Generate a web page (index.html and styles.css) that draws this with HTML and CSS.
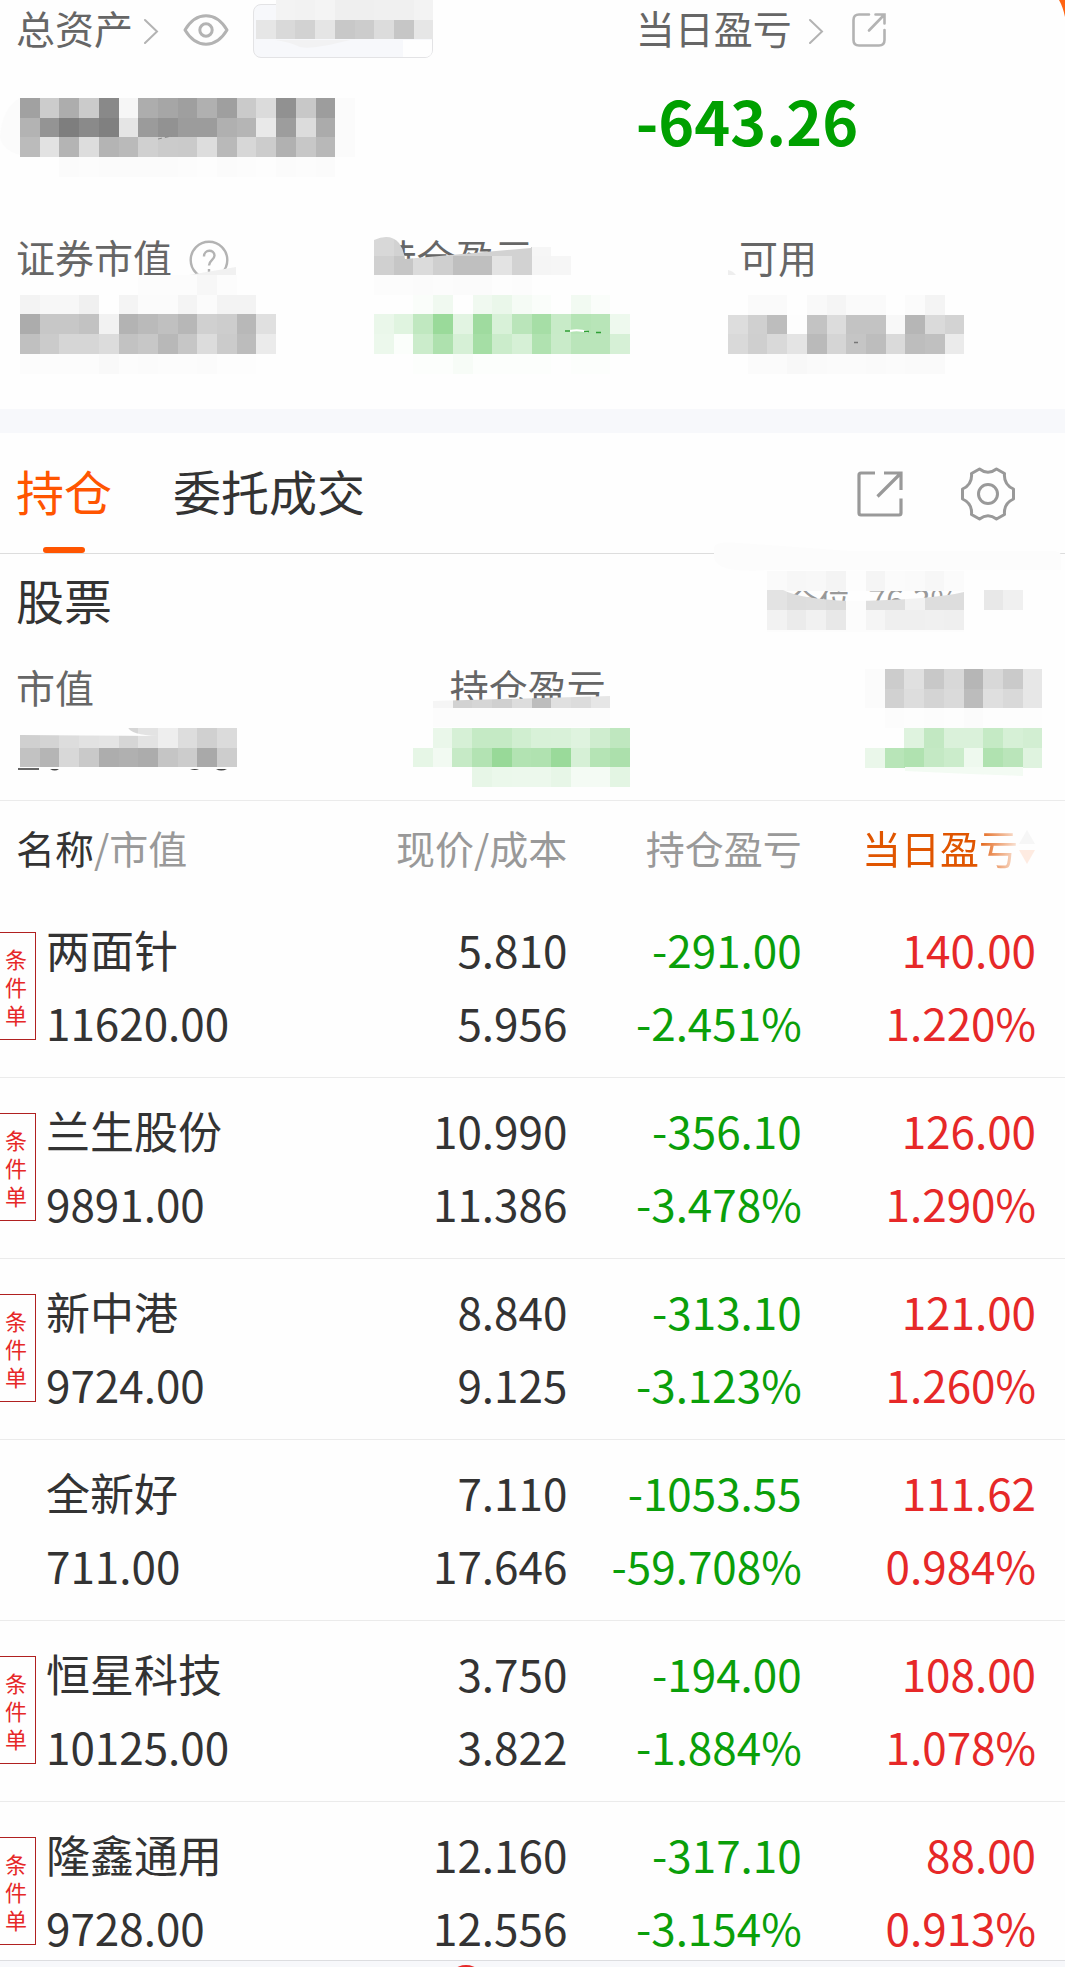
FILE: index.html
```html
<!DOCTYPE html>
<html lang="zh-CN">
<head>
<meta charset="utf-8">
<meta name="viewport" content="width=device-width, initial-scale=1">
<title>持仓</title>
<link rel="stylesheet" href="styles.css">
</head>
<body>
<div class="app">
<main class="scroll">
  <section class="summary">
    <div class="totals">
      <div>
        <div class="head">
          <a class="head-link" href="#assets"><span class="label">总资产</span>
            <svg class="chevron" width="16" height="26" viewBox="0 0 16 26"><path d="M2 2 14 13.500 2 25"/></svg></a>
          <button class="icon-btn" type="button" aria-label="隐藏金额">
            <svg width="46" height="32" viewBox="0 0 46 32" fill="none" stroke="#b3b3b3" stroke-width="3"><path d="M2 16C8 6 15 1.800 23 1.800S38 6 44 16C38 26 31 30.200 23 30.200S8 26 2 16Z" stroke-linejoin="round"/><circle cx="23" cy="16" r="6.200"/></svg>
          </button>
          <span class="pill"></span>
        </div>
      </div>
      <div>
        <div class="head head-day">
          <a class="head-link" href="#day"><span class="label">当日盈亏</span>
            <svg class="chevron" width="16" height="26" viewBox="0 0 16 26"><path d="M2 2 14 13.500 2 25"/></svg></a>
          <button class="icon-btn" type="button" aria-label="分享">
            <svg width="34" height="34" viewBox="0 0 34 34" fill="none" stroke="#b3b3b3" stroke-width="2.600" stroke-linecap="round"><path d="M17 1.500H7Q1.500 1.500 1.500 7V27Q1.500 32.500 7 32.500H27Q32.500 32.500 32.500 27V17"/><path d="M23.500 1.500H32.500V10.500M32 2 17 17.500"/></svg>
          </button>
        </div>
        <div class="day-value">-643.26</div>
      </div>
    </div>
    <div class="metrics">
      <div class="metric"><span class="label">证券市值</span>
        <svg class="help" width="40" height="34" viewBox="0 0 40 34" fill="none" stroke="#b3b3b3" stroke-width="2.400"><circle cx="20" cy="20" r="18.300"/><path d="M15 16.500C15 9 25.500 9 25.500 15.500 25.500 20 20 20.500 20 25.500M20 29V32"/></svg></div>
      <div class="metric"><span class="label">持仓盈亏</span></div>
      <div class="metric"><span class="label">可用</span></div>
    </div>
    <svg class="redaction" width="1065" height="409" viewBox="0 0 1065 409" aria-hidden="true">
      <clipPath id="pnl-label"><path d="M374 240Q390 233 399 243 404 250 405 259L531 248V247H575V276H374Z"/></clipPath>
      <path d="M403 40H432V50Q432 57 425 57H403Z" fill="#fefefe"/>
      <g data-at="256 0" data-cells="- f3 f2 f4 ef ef f0 f0 f3/e6 d9 d2 e5 c8 cc dc c6 e6"></g>
      <path d="M275 40H350Q312 50 300 47 290 42 275 40Z" fill="#f2f2f3"/>
      <path d="M0 137Q2 108 20 98V155Q2 150 0 137Z" fill="#fbfbfb"/>
      <g data-at="20 98" data-cells="a1 cc ad cb 89 f6 ad a6 9f b0 9f ca db 91 c8 9d fb/b3 94 7e 8a 80 e5 9b 92 9c 9c b0 b5 e9 9d dc ab fb/bb e2 b4 dd b4 ba d0 cb ca dd b9 d7 cc b1 c7 b8 fb/- - fb fc fb fb fb fb fc fd fb fc fd fb fc fb"></g>
      <path d="M158 139 172 136" stroke="#8a8a8a" stroke-dasharray="4 3"/>
      <path d="M189 275 236 267V275Z" fill="#f1f1f1"/>
      <g data-at="20 275" data-cells="- - - - - - fc fc fc f7 fc/f3 f7 f7 f0 fe f4 fb fb f4 fb f3 f3/ac c7 c7 c2 f2 b3 ba c0 b7 d0 cd b8 e0/c0 cb d6 d6 dc c2 c7 b8 c6 dc cb bc eb/fc fc fc fc f9 fc fb fc fc fb fd fd"></g>
      <g clip-path="url(#pnl-label)"><g data-at="374 236" data-cells="d8 d2 d2 d2 d2 d2 d2 d2 f6/d0 c6 db cf bf bf e3 d2 f5 f6"></g></g>
      <g data-at="374 275" data-cells="fc fc fb fc fb fb fd fc/- - gfa gf0 - gf0 gea gf5 gfa - gf2 gfa/gea ge0 gc0 g9a ge2 g9f gd8 gba ga6 gc8 gb5 gb8 gee/gec gfb gcb gae gd6 ga5 gcb gd6 gb0 gc9 gba gba gd6/- - gfc gfc gf7 gfc gfc gfc gfc - gfc gfc"></g>
      <path d="M570 331Q578 329 588 332" stroke="#fff" stroke-width="2" fill="none"/>
      <path d="M565 331h5M584 331.500h5M596 332.500h5" stroke="#2f9f35" stroke-width="1.500"/>
      <path d="M728 270Q733 271 736 275H728Z" fill="#eee"/>
      <g data-at="728 295" data-cells="- fa fa - f9 f5 fa fa - fb f4/dd d0 bd fd c3 dc c3 c3 f8 b6 da d3/d9 cf d9 e4 ba d5 c5 bd da bd c0 eb/- fb fb f8 fa fb fb fa fb fa fa"></g>
      <path d="M854 342.500h4" stroke="#777" stroke-width="1.500"/>
    </svg>
    <svg class="corner" width="6" height="17" viewBox="0 0 6 17"><path d="M0 0H6V17Q4 7 0 0Z" fill="#ff6412"/></svg>
  </section>

  <section class="panel">
    <nav class="tabs">
      <button class="tab active" type="button">持仓</button>
      <button class="tab" type="button">委托成交</button>
      <span class="tools">
        <button class="icon-btn" type="button" aria-label="导出">
          <svg width="46" height="46" viewBox="0 0 46 46" fill="none" stroke="#999" stroke-width="3.200"><path d="M18 2H4Q2 2 2 4V42Q2 44 4 44H42Q44 44 44 42V27.500"/><path d="M27 2H44V19M43.500 2.500 20.500 25.500"/></svg>
        </button>
        <button class="icon-btn" type="button" aria-label="设置">
          <svg width="54" height="54" viewBox="0 0 54 54" fill="none" stroke="#999" stroke-width="3" stroke-linejoin="round"><path d="M18.500 2Q27 8.500 35.500 2L43.500 6.500Q42.500 17.500 52.500 22V32Q42.500 36.500 43.500 47.500L35.500 52Q27 45.500 18.500 52L10.500 47.500Q11.500 36.500 1.500 32V22Q11.500 17.500 10.500 6.500Z"/><circle cx="27" cy="27" r="9.500"/></svg>
        </button>
      </span>
    </nav>
    <div class="stock-head"><h2>股票</h2><p class="position"><span>仓位</span><span>76.3%</span></p></div>
    <div class="stock-metrics">
      <div class="metric"><span class="label">市值</span></div>
      <div class="metric"><span class="label">持仓盈亏</span></div>
    </div>
    <svg class="redaction" width="1065" height="367" viewBox="0 433 1065 367" aria-hidden="true">
      <clipPath id="position-cut"><path d="M767 590H783Q800 599 850 601 930 600 964 592V588H1065V611H767Z"/></clipPath>
      <clipPath id="value-cut"><path d="M20 735 158 736Q130 735 128 727H240V768H20Z"/></clipPath>
      <clipPath id="label-cut"><path d="M433 701 610 696V708H433Z"/></clipPath>
      <path d="M714 548Q714 541 740 543L850 551H1052Q1061 551 1061 556V570H767Q714 574 714 556Z" fill="#fcfcfc"/>
      <path d="M767 601H964V632H767Z" fill="#fcfcfc"/>
      <g data-at="767 571" data-cells="fa f7 f8 f4 fd f5 fb fa f7 fb"></g>
      <g clip-path="url(#position-cut)"><g data-at="767 590" data-cells="e3 dd de db fc df df f2 dd dd - e8 f0"></g></g>
      <g data-at="767 610" data-cells="f2 eb f1 e8 fc f5 ef ef f0 ef"></g>
      <path d="M18 769h21" stroke="#333" stroke-width="1.500"/>
      <path d="M50 769Q55 772 59 769ZM128 769.500h8M175 769.500h3M190 769Q195 771 199 769ZM216 769Q221 772 227 769Z" fill="#444"/>
      <g clip-path="url(#value-cut)"><g data-at="20 728" data-cells="d0 d4 dd e2 e4 d6 e3 ee dd d0 db/c2 b5 d8 c9 ad b0 ac c5 cc a9 cd"></g></g>
      <path d="M433 708H610V727H433Z" fill="#fcfcfc"/>
      <g clip-path="url(#label-cut)"><g data-at="433 688" data-cells="f5 d2 d6 d0 dd bd e0 dc e6"></g></g>
      <g data-at="413 728" data-cells="- gea gd6 gc5 gc5 gd0 gd8 gd9 gdf gcf gbf/ge6 gf2 gc6 gb3 g98 gb2 gb0 g9a gd6 gb5 gac/- - - ge7 geb gec gec ge7 gf4 gf4 ge3"></g>
      <g data-at="865 669" data-cells="fb cc e0 c8 d8 b6 d8 ca e7/fb d1 dd d4 da bc df d9 e7/- fc fd fc fd fb fd fd fd/- - gdf gc2 gda gda gc5 gd6 gd2/gea gb8 gb0 gc4 gcb gee gb0 gba gdf"></g>
      <path d="M905 767H1023V776L970 774 905 771Z" fill="#f3fbf3"/>
    </svg>
  </section>

  <table class="holdings">
    <colgroup><col class="wide"><col class="wide"><col><col></colgroup>
    <thead>
      <tr>
        <th scope="col"><span class="strong">名称</span>/市值</th>
        <th scope="col">现价/成本</th>
        <th scope="col">持仓盈亏</th>
        <th scope="col"><button class="sort" type="button">当日盈亏<svg width="18" height="36" viewBox="0 0 18 36"><path d="M9 1 17 15H1Z" fill="#bbb"/><path d="M1 21H17L9 35Z" fill="#ff6412"/></svg></button></th>
      </tr>
    </thead>
    <tbody>
      <tr><td><div class="stock"><span class="badge">条件单</span><span class="name">两面针<br>11620.00</span></div></td><td>5.810<br>5.956</td><td class="down">-291.00<br>-2.451%</td><td class="up">140.00<br>1.220%</td></tr>
      <tr><td><div class="stock"><span class="badge">条件单</span><span class="name">兰生股份<br>9891.00</span></div></td><td>10.990<br>11.386</td><td class="down">-356.10<br>-3.478%</td><td class="up">126.00<br>1.290%</td></tr>
      <tr><td><div class="stock"><span class="badge">条件单</span><span class="name">新中港<br>9724.00</span></div></td><td>8.840<br>9.125</td><td class="down">-313.10<br>-3.123%</td><td class="up">121.00<br>1.260%</td></tr>
      <tr><td><div class="stock"><span class="name">全新好<br>711.00</span></div></td><td>7.110<br>17.646</td><td class="down">-1053.55<br>-59.708%</td><td class="up">111.62<br>0.984%</td></tr>
      <tr><td><div class="stock"><span class="badge">条件单</span><span class="name">恒星科技<br>10125.00</span></div></td><td>3.750<br>3.822</td><td class="down">-194.00<br>-1.884%</td><td class="up">108.00<br>1.078%</td></tr>
      <tr><td><div class="stock"><span class="badge">条件单</span><span class="name">隆鑫通用<br>9728.00</span></div></td><td>12.160<br>12.556</td><td class="down">-317.10<br>-3.154%</td><td class="up">88.00<br>0.913%</td></tr>
    </tbody>
  </table>
</main>
<footer class="bottom-bar"><span class="dot"></span></footer>
</div>
<script src="mosaic.js"></script>
</body>
</html>
```
FILE: styles.css
```css
* { box-sizing: border-box; }

body {
  margin: 0;
  background: #fefefe;
  color: #333;
  font-family: "Noto Sans CJK SC", "Noto Sans", sans-serif;
  font-size: 39px;
}

button {
  margin: 0;
  padding: 0;
  border: 0;
  background: none;
  color: inherit;
  font: inherit;
}

a { color: inherit; text-decoration: none; }
svg { display: block; flex: none; }

.app {
  display: flex;
  flex-direction: column;
  height: 100vh;
}

.scroll {
  flex: 1;
  min-height: 0;
  overflow: hidden auto;
  scrollbar-width: none;
}

.label {
  padding-bottom: 4px;
  color: #666;
  line-height: 54px;
  white-space: nowrap;
}

/* Account summary */
.summary {
  position: relative;
  overflow: hidden;
  padding: 0 16px;
  border-bottom: 24px solid #f7f8fb;
}

.totals {
  display: grid;
  grid-template-columns: 60% 40%;
}

.head {
  display: flex;
  align-items: center;
  gap: 24px;
  height: 58px;
}

.head-link {
  display: flex;
  align-items: center;
  gap: 10px;
}

.head-day { gap: 28px; }
.head-day .head-link { gap: 16px; }

.chevron {
  margin-top: 4px;
  fill: none;
  stroke: #b3b3b3;
  stroke-width: 2;
  stroke-linecap: round;
}

.pill {
  align-self: flex-end;
  width: 180px;
  height: 54px;
  border: 1px solid #e3e3e5;
  border-radius: 8px;
  background: #f7f8fb;
}

.icon-btn { padding-top: 2px; }

.day-value {
  margin-top: 24px;
  color: #00a000;
  font-size: 61px;
  font-weight: 700;
  line-height: 76px;
}

.metrics {
  display: grid;
  grid-template-columns: 35% 35% 30%;
  margin-top: 71px;
  min-height: 180px;
}

.metric {
  display: flex;
  align-items: flex-start;
  gap: 17px;
}

.help { margin-top: 11px; }

.redaction {
  position: absolute;
  top: 0;
  left: 0;
  pointer-events: none;
}

.corner {
  position: absolute;
  top: 0;
  right: 0;
}

/* Tabs and stock totals */
.panel {
  position: relative;
  overflow: hidden;
  border-bottom: 1px solid #ebebeb;
}

.tabs {
  display: flex;
  align-items: stretch;
  gap: 61px;
  height: 121px;
  padding: 0 50px 0 16px;
  border-bottom: 1px solid #ddd;
}

.tab {
  position: relative;
  padding-bottom: 6px;
  font-size: 48px;
  white-space: nowrap;
}

.active { color: #ff5500; }

.active::after {
  content: "";
  position: absolute;
  bottom: 0;
  left: 50%;
  width: 42px;
  height: 6px;
  margin-left: -21px;
  border-radius: 3px;
  background: #ff5500;
}

.tools {
  display: flex;
  align-items: center;
  gap: 58px;
  margin-left: auto;
}

.stock-head {
  display: flex;
  align-items: center;
  justify-content: space-between;
  padding: 0 105px 2px 16px;
}

.stock-head h2 {
  margin: 0;
  font-size: 48px;
  font-weight: 400;
  line-height: 90px;
}

.position {
  display: flex;
  gap: 18px;
  margin: 0;
  color: #999;
  font-size: 32px;
}

.stock-metrics {
  display: grid;
  grid-template-columns: 42% 58%;
  min-height: 154px;
  padding: 13px 16px 0;
}

/* Holdings */
.holdings {
  width: 100%;
  border-collapse: collapse;
  table-layout: fixed;
}

.holdings col { width: 22%; }
.holdings .wide { width: 28%; }

.holdings th {
  height: 96px;
  padding: 0 29px 5px 0;
  color: #999;
  font-weight: 400;
  line-height: 54px;
  text-align: right;
  white-space: nowrap;
}

.holdings th:first-child {
  padding-left: 16px;
  text-align: left;
}

.strong { color: #333; }

.sort {
  display: inline-flex;
  align-items: center;
  color: #e05500;
  -webkit-mask-image: linear-gradient(to right, #000 65%, rgba(0, 0, 0, .12) 90%);
  mask-image: linear-gradient(to right, #000 65%, rgba(0, 0, 0, .12) 90%);
}

.holdings td {
  padding: 16px 29px 18px 0;
  border-bottom: 1px solid #ebebeb;
  font-size: 44px;
  line-height: 73px;
  text-align: right;
  white-space: nowrap;
}

.holdings td:first-child { padding-right: 0; }

.stock {
  display: grid;
  grid-template-columns: 36px 1fr;
  align-items: center;
  column-gap: 10px;
  text-align: left;
}

.name { grid-column: 2; }

.badge {
  padding: 11px 8px 11px 5px;
  border: 1px solid #b02020;
  border-left: 0;
  color: #e62828;
  font-size: 22px;
  line-height: 28px;
  white-space: normal;
  word-break: break-all;
}

.down { color: #0a9f0a; }
.up { color: #e62828; }

.bottom-bar {
  height: 7px;
  overflow: hidden;
  border-top: 1px solid #dcdde0;
  background: #f7f8fb;
}

.dot {
  display: block;
  width: 38px;
  height: 38px;
  margin: 4px 0 0 42%;
  border-radius: 50%;
  background: #e62828;
}
```
FILE: mosaic.js
```js
// Fills each [data-cells] group with square blocks that hide private amounts.
// "c0" is a grey level, "gc0" a green of that lightness, "-" leaves a gap.
const SIZE = 19.7;

document.querySelectorAll('[data-cells]').forEach((group) => {
  const [left, top] = group.dataset.at.split(' ').map(Number);
  group.dataset.cells.split('/').forEach((row, y) => {
    row.split(' ').forEach((cell, x) => {
      if (cell === '-') return;
      const level = parseInt(cell.replace('g', ''), 16);
      const green = cell[0] === 'g' ? Math.round(255 - (255 - level) * 0.37) : level;
      const rect = document.createElementNS('http://www.w3.org/2000/svg', 'rect');
      const x0 = Math.round(left + x * SIZE);
      const y0 = Math.round(top + y * SIZE);
      rect.setAttribute('x', x0);
      rect.setAttribute('y', y0);
      rect.setAttribute('width', Math.round(left + (x + 1) * SIZE) - x0);
      rect.setAttribute('height', Math.round(top + (y + 1) * SIZE) - y0);
      rect.setAttribute('fill', `rgb(${level},${green},${level})`);
      group.appendChild(rect);
    });
  });
});
```
